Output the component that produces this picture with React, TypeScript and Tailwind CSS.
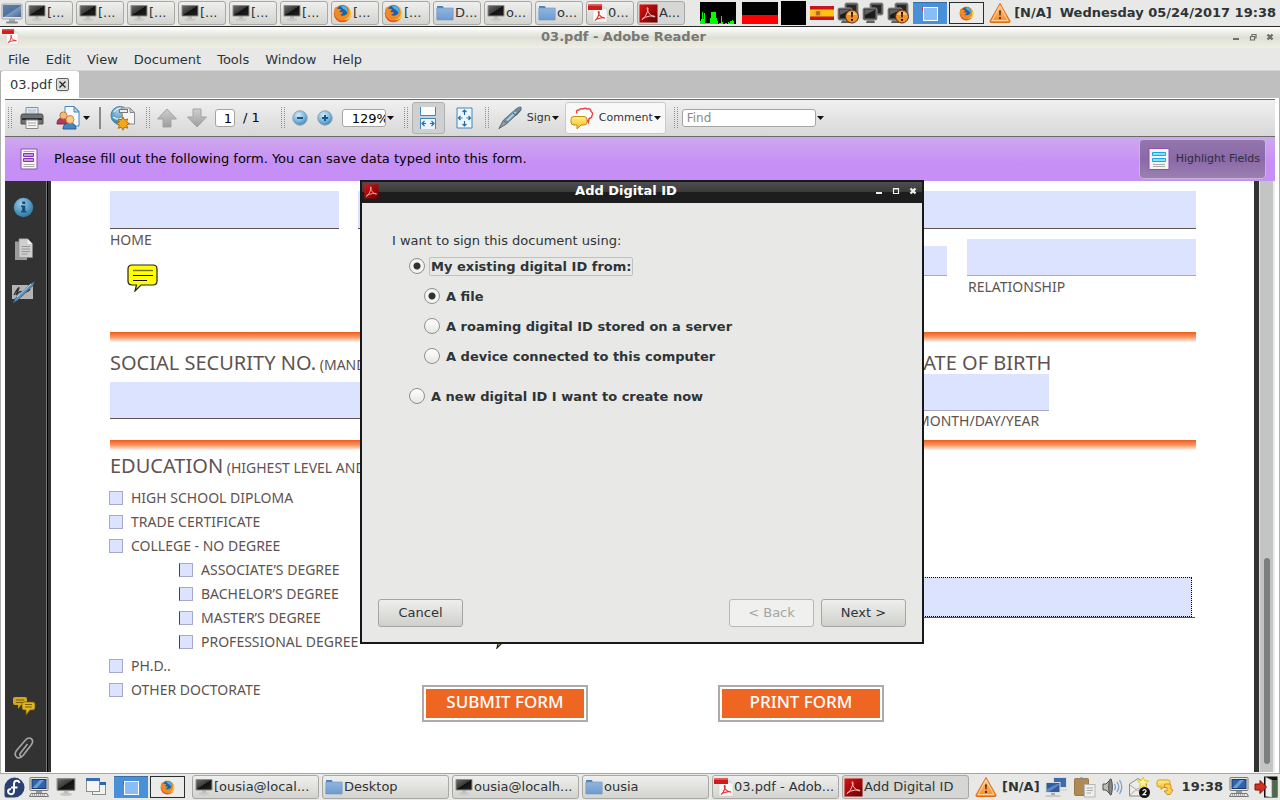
import React from "react";

const uiFont = "font-['DejaVu_Sans',sans-serif]";
const formFont = "font-['Noto_Sans',sans-serif]";

function Defs() {
  return (
    <svg width="0" height="0" className="absolute" aria-hidden="true">
      <defs>
        <linearGradient id="gScreen" x1="0" y1="0" x2="1" y2="1">
          <stop offset="0" stopColor="#6a6a6a" />
          <stop offset=".48" stopColor="#3a3a3a" />
          <stop offset=".5" stopColor="#111" />
          <stop offset="1" stopColor="#222" />
        </linearGradient>
        <linearGradient id="gBlueScreen" x1="0" y1="0" x2="1" y2="1">
          <stop offset="0" stopColor="#5f82ac" />
          <stop offset=".5" stopColor="#5273a0" />
          <stop offset=".55" stopColor="#7f9cc0" />
          <stop offset="1" stopColor="#456690" />
        </linearGradient>
        <linearGradient id="gFolder" x1="0" y1="0" x2="0" y2="1">
          <stop offset="0" stopColor="#91b5de" />
          <stop offset="1" stopColor="#6c9bd0" />
        </linearGradient>
        <linearGradient id="gRed" x1="0" y1="0" x2="1" y2="1">
          <stop offset="0" stopColor="#e01010" />
          <stop offset="1" stopColor="#6a0000" />
        </linearGradient>
        <linearGradient id="gFlame" x1="0" y1="1" x2="1" y2="0">
          <stop offset="0" stopColor="#d9341b" />
          <stop offset=".6" stopColor="#f58220" />
          <stop offset="1" stopColor="#fcd535" />
        </linearGradient>
        <linearGradient id="gWarn" x1="0" y1="0" x2="0" y2="1">
          <stop offset="0" stopColor="#ffc58a" />
          <stop offset="1" stopColor="#fb8a1e" />
        </linearGradient>
        <radialGradient id="gBall" cx=".4" cy=".3" r=".75">
          <stop offset="0" stopColor="#d3ecf8" />
          <stop offset=".55" stopColor="#7cbbe0" />
          <stop offset="1" stopColor="#3b7fb4" />
        </radialGradient>
        <radialGradient id="gInfo" cx=".4" cy=".3" r=".8">
          <stop offset="0" stopColor="#9fcbe2" />
          <stop offset=".6" stopColor="#4a94c0" />
          <stop offset="1" stopColor="#2a6794" />
        </radialGradient>
        <linearGradient id="gGrey" x1="0" y1="0" x2="0" y2="1">
          <stop offset="0" stopColor="#cfcfcf" />
          <stop offset="1" stopColor="#9d9d9d" />
        </linearGradient>
        <linearGradient id="gYellow" x1="0" y1="0" x2="0" y2="1">
          <stop offset="0" stopColor="#fff08a" />
          <stop offset="1" stopColor="#f5b91e" />
        </linearGradient>
      </defs>
    </svg>
  );
}

/* ---------- icons ---------- */

const MonitorIcon = ({ s = 18 }: { s?: number }) => (
  <svg width={s} height={s} viewBox="0 0 18 18" className="shrink-0">
    <ellipse cx="9" cy="15.6" rx="5.5" ry="1.6" fill="#c9c9c7" />
    <path d="M7 12h4v3H7z" fill="#bdbdbb" />
    <rect x=".5" y="1" width="17" height="11.5" rx="1" fill="#8d8d8b" />
    <rect x="1.5" y="2" width="15" height="9.5" fill="url(#gScreen)" />
  </svg>
);

const DesktopIcon = ({ s = 22 }: { s?: number }) => (
  <svg width={s} height={s} viewBox="0 0 22 22" className="shrink-0">
    <path d="M8 17h6v3H8z" fill="#a9a9a7" />
    <rect x="5" y="19.5" width="12" height="2" rx="1" fill="#8e8e8c" />
    <rect x="1" y="2" width="20" height="15" rx="1" fill="#e3e4e2" stroke="#a5a6a4" />
    <rect x="2" y="3" width="18" height="12" fill="url(#gBlueScreen)" />
  </svg>
);

const ComputerIcon = () => (
  <svg width="22" height="22" viewBox="0 0 22 22" className="shrink-0">
    <rect x="2" y="1.5" width="18" height="13" rx="1" fill="#ececea" stroke="#777" />
    <rect x="4" y="3.5" width="14" height="9" fill="#2f63ad" stroke="#17386c" />
    <path d="M4.500 12 12 4h4l-7 8z" fill="#6f9bd4" />
    <path d="M8 15h6v2H8z" fill="#999" />
    <path d="M3 17.500h16l1.500 3h-19z" fill="#e4e4e2" stroke="#777" />
    <path d="M4 19h14" stroke="#777" strokeDasharray="1 1" />
  </svg>
);

const FolderIcon = () => (
  <svg width="18" height="18" viewBox="0 0 18 18" className="shrink-0">
    <path d="M1 4V2.500Q1 2 1.600 2h5.200l1 2z" fill="#4f7fb8" />
    <path d="M.8 4h16.400v11.400q0 .6-.6.6H1.400q-.6 0-.6-.6z" fill="url(#gFolder)" stroke="#6b95c6" strokeWidth=".6" />
  </svg>
);

const FirefoxIcon = ({ s = 19 }: { s?: number }) => (
  <svg width={s} height={s} viewBox="0 0 20 20" className="shrink-0">
    <circle cx="10" cy="10" r="9.200" fill="url(#gFlame)" />
    <circle cx="10.200" cy="7.800" r="6.400" fill="#1f5fa8" />
    <path d="M8 2.200q4-1.400 6.800 1.500 2 3 .5 6.300Q14 6 10.500 5z" fill="#4fb3e6" />
    <path d="M2 3.500Q3.800 4 5 5.200q2-.4 3.500.6Q7.200 7 7 8.400q1.600.6 3.400.2-.4 2.300-3 3.100 3 1.800 6.600-.7 2.600-2.200 2.200-5.800 3 4.500.2 8.800-3.400 4.200-8.400 3.300Q2.500 15.700 1.400 10 1.200 6 2 3.500z" fill="#f08a24" />
    <path d="M17 5q1.800 3.500 0 7.500-2 3.500-6 4.300 6.400.6 7.800-5Q19.400 8 17 5z" fill="#fcd23a" />
  </svg>
);

const PdfIcon = ({ s = 20 }: { s?: number }) => (
  <svg width={s} height={s} viewBox="0 0 20 20" className="shrink-0">
    <path d="M5 1.500h9l5 5V19H5z" fill="#fafafa" stroke="#cfcfcf" strokeWidth=".7" />
    <path d="M14 1.500v5h5z" fill="#ddd" />
    <path d="M0 1.500h14v5.500H0z" fill="#cf1b1b" />
    <path d="M0 1.500h14v1.500H0z" fill="#e4504a" />
    <path d="M7 17.500q2.500-1.200 4.200-7.500.2-1.500-.6-1.500-1 .6.800 3.600 2 2.600 5.600 3-2.300-.8-6.200.4Q8 16.300 7 17.500z" fill="none" stroke="#e2302c" strokeWidth="1.100" />
  </svg>
);

const AcrobatIcon = ({ s = 19 }: { s?: number }) => (
  <svg width={s} height={s} viewBox="0 0 20 20" className="shrink-0">
    <rect x=".5" y=".5" width="19" height="19" fill="url(#gRed)" />
    <path d="M3 16.500q4-2 6.300-9.500.5-3.200-.4-3.200-1.200.4.800 4.800 2.400 4.300 6.700 5.200 1-.8-.8-1.300-4.200-.2-8.600 1.300Q4 15.300 3 16.500z" fill="none" stroke="#f4d0d0" strokeWidth="1" />
  </svg>
);

const FlagIcon = () => (
  <svg width="24" height="14" viewBox="0 0 24 14" className="shrink-0">
    <path d="M0 0h24v14H0z" fill="#c8141e" />
    <path d="M0 3.500h24v7H0z" fill="#fcc40f" />
    <rect x="6" y="5" width="4" height="4.500" rx="1" fill="#b8642a" />
    <path d="M5 5v4.500M11 5v4.500" stroke="#d9a070" />
  </svg>
);

const NetworkIcon = ({ alert }: { alert?: boolean }) => (
  <svg width="23" height="22" viewBox="0 0 23 22" className="shrink-0">
    <rect x="8" y="1" width="13" height="12" rx="1.500" fill="#555" stroke="#8a8a8a" />
    <path d="M10 3h9v8h-9z" fill="#262626" />
    <rect x="1" y="6" width="14" height="12" rx="1.500" fill="#4a4a4a" stroke="#909090" />
    <path d="M3 8h10v8H3z" fill="#1c1c1c" />
    <path d="M3 8h10L3 13z" fill="#606060" />
    <path d="M5 18.500h7l1 2.500H4z" fill="#5f5f5f" />
    {alert && (
      <g>
        <circle cx="15" cy="14.500" r="6.500" fill="#f3902b" stroke="#5b2a10" />
        <path d="M10 13a5.500 5.500 0 0 1 10 0z" fill="#fdc36b" />
        <path d="M14 10h2l-.4 5.500h-1.200zM14 17h2v1.800h-2z" fill="#111" />
      </g>
    )}
  </svg>
);

const WarningIcon = () => (
  <svg width="22" height="22" viewBox="0 0 22 22" className="shrink-0">
    <path d="M11 1.500 21 19q.4 1.500-1 1.500H2Q.6 20.500 1 19z" fill="url(#gWarn)" stroke="#e06c10" strokeLinejoin="round" />
    <path d="M11 4 18.800 18.500H3.200z" fill="none" stroke="#ffe0bd" strokeWidth=".8" />
    <path d="M10 8.500h2l-.4 5h-1.200zM10 15h2v2h-2z" fill="#4c3320" />
  </svg>
);

const CpuGraph = () => (
  <svg width="36" height="22" viewBox="0 0 36 22" className="shrink-0" shapeRendering="crispEdges">
    <path d="M0 0h36v22H0z" fill="#000" />
    <path d="M0 22v-3h1v-2h1v-7h1v7h1v-6h1v10h5v-5h1v-6h5v6h1v3h1v3h1v-1h2v-7h1v6h1v2h2v-1h2v1h1v-2h1v1h1v-2h2v-1h1v1h1v4z" fill="#0f0" />
  </svg>
);

const Pager = () => (
  <div className="flex shrink-0 items-center gap-[2px]">
    <button aria-label="Workspace 1" className="flex h-[22px] w-[34px] items-center justify-center border-t border-[#3a6da5] bg-[#4a90d9]">
      <svg width="16" height="14" viewBox="0 0 16 14">
        <path d="M0 0h4v4H0z" fill="#d43a3a" />
        <rect x="1.500" y=".5" width="14" height="13" fill="#8abdf5" stroke="#fff" />
      </svg>
    </button>
    <button aria-label="Workspace 2" className="flex h-[22px] w-[35px] items-center justify-center border border-[#2a2d30] bg-[#ebebe9]">
      <FirefoxIcon s={15} />
    </button>
  </div>
);

const FedoraIcon = () => (
  <svg width="21" height="21" viewBox="0 0 21 21" className="shrink-0">
    <path d="M10.500.5a10 10 0 1 1 0 20H2.500Q.5 20.500.5 18.500v-8a10 10 0 0 1 10-10z" fill="#294172" />
    <path d="M15.500 6q-.6-2.200-2.700-2.200-2.800 0-2.800 3V14q0 3.200-3 3.200-2.600 0-3-2.500 0-2.700 3-2.700M7 10.500h6.500" fill="none" stroke="#fff" strokeWidth="1.900" />
  </svg>
);

const WindowsIcon = () => (
  <svg width="22" height="20" viewBox="0 0 22 20" className="shrink-0">
    <rect x="7.500" y="6.500" width="13" height="11" fill="#f2f2f0" stroke="#8d8d8b" />
    <path d="M7 5h14v3H7z" fill="#2f63ad" />
    <rect x="1.500" y="2.500" width="13" height="12" fill="#f5f5f3" stroke="#8d8d8b" />
    <path d="M1 1h14v3H1z" fill="#3b6cb2" />
  </svg>
);

const NetBlueIcon = () => (
  <svg width="23" height="22" viewBox="0 0 23 22" className="shrink-0">
    <rect x="8.500" y="1.500" width="13" height="10" fill="#3f6cae" stroke="#dcdcda" />
    <path d="M9 13h13l1 2H9z" fill="#d8d8d6" />
    <rect x="1" y="6.500" width="14" height="10" fill="#2f5c9f" stroke="#dcdcda" />
    <path d="M2 13 12 8h2v1L4 16H2z" fill="#5f87bf" />
    <path d="M1 19h14l1 2H0z" fill="#c9c9c7" />
    <path d="M6 17h4v2H6z" fill="#aaa" />
  </svg>
);

const ClipboardIcon = () => (
  <svg width="23" height="22" viewBox="0 0 23 22" className="shrink-0">
    <rect x="1.500" y="2.500" width="14" height="17" rx="1" fill="#b08a55" stroke="#9a7747" />
    <path d="M5 4V2h2q1.500-2 3 0h2v2z" fill="#8a8a86" />
    <rect x="11.500" y="8.500" width="10.500" height="12.500" fill="#efefed" stroke="#b5b5b3" />
    <path d="M13.500 12h6.500M13.500 14.500h6.500M13.500 17h4.500" stroke="#aaa" />
  </svg>
);

const SpeakerIcon = () => (
  <svg width="22" height="22" viewBox="0 0 22 22" className="shrink-0">
    <path d="M2 8h3l5-5v16l-5-5H2z" fill="#bdbdbb" stroke="#4e4e4c" />
    <ellipse cx="9.500" cy="11" rx="1.800" ry="8" fill="#8a8a88" stroke="#4e4e4c" />
    <path d="M13.500 8q2 3 0 6M16 6q3.500 5 0 10M18.500 4q4.500 7 0 14" fill="none" stroke="#7f9fd0" strokeWidth="1.300" />
  </svg>
);

const MailIcon = () => (
  <svg width="23" height="22" viewBox="0 0 23 22" className="shrink-0">
    <path d="M1.500 8 10 2.500 18.500 8v12h-17z" fill="#ecece8" stroke="#8d8d89" />
    <path d="m2 19 8-7 8 7M2 9l8 6 8-6" fill="none" stroke="#aaa" />
    <path d="m15 1 1.600 3.700 4 .3-3 2.700.9 4-3.500-2.100L11.500 11.700l.9-4-3-2.700 4-.3z" fill="#fff59a" stroke="#e9c81c" />
    <circle cx="16.500" cy="16.500" r="5.500" fill="#111" />
    <path d="M14.800 15q.3-1.500 1.800-1.500 1.600.2 1.500 1.500-.3 1-3 3.700h3.300" fill="none" stroke="#fff" strokeWidth="1.200" />
  </svg>
);

const ChatArrowIcon = () => (
  <svg width="18" height="18" viewBox="0 0 18 18" className="shrink-0">
    <path d="M3 2h9q2 0 2 2v3q0 2-2 2H8l-3 2.500V9H3Q1 9 1 7V4q0-2 2-2z" fill="url(#gYellow)" stroke="#d99a1b" />
    <path d="M9 6h4q2 0 2 2v3l2 1-3 4.500-3 0-3-3.500h3V9.500H8z" fill="#ffd057" stroke="#d98a13" />
  </svg>
);

const ExitIcon = () => (
  <svg width="24" height="22" viewBox="0 0 24 22" className="shrink-0">
    <path d="M10 .5h13.500v21H10z" fill="#111" />
    <path d="M18 4h5v17h-5z" fill="#4b6b4b" />
    <path d="m11.500 1 6.500 3v17.500l-6.500-1z" fill="#f0f0ee" stroke="#777" strokeWidth=".7" />
    <path d="M1 8h5V4.500l6.500 6.500L6 17.500V14H1z" fill="#d5311d" stroke="#7a150c" />
  </svg>
);

const PrinterIcon = () => (
  <svg width="24" height="24" viewBox="0 0 24 24">
    <path d="M6 1.500h12V10H6z" fill="#dfe9f2" stroke="#8a9299" />
    <path d="M8 4h8M8 6h8" stroke="#aebdca" />
    <path d="M3 8h18q2 0 2 2v8H1v-8q0-2 2-2z" fill="#6f7275" stroke="#4a4c4e" />
    <path d="M2 12h20v2H2z" fill="#2e3032" />
    <path d="M6 14h12v8.500H6z" fill="#f4f4f4" stroke="#8a8a8a" />
    <path d="M8 17h8M8 19.500h8" stroke="#a9a9a9" />
  </svg>
);

const PeopleIcon = () => (
  <svg width="25" height="24" viewBox="0 0 25 24">
    <path d="M9 .5h9l5 5V20H9z" fill="#f7fbff" stroke="#4b86bd" />
    <path d="M18 .5V6h5z" fill="#b9d3ea" stroke="#4b86bd" />
    <path d="M1 18q0-6 5.500-6t5.500 6z" fill="#b23a5c" stroke="#84243f" />
    <circle cx="7.500" cy="9.500" r="3.600" fill="#f6ba7c" stroke="#c27c3c" />
    <path d="M7 23q0-6 6.500-6t6.500 6z" fill="#4684bf" stroke="#245c94" />
    <circle cx="14" cy="13.500" r="4" fill="#fcc98d" stroke="#cf8440" />
  </svg>
);

const GlobeIcon = () => (
  <svg width="26" height="25" viewBox="0 0 26 25">
    <circle cx="10" cy="9.500" r="9" fill="url(#gInfo)" stroke="#4a7fa9" />
    <path d="M4 6q3-4 8-4M3 11q5 4 11 0" fill="none" stroke="#d6eaf7" strokeWidth="1.500" />
    <path d="M11 2h9l4.500 4.500V18H14z" fill="#f5f5f5" stroke="#8b8b8b" />
    <path d="M20 2v4.500h4.500z" fill="#cfcfcf" stroke="#8b8b8b" />
    <rect x="9.500" y="3.500" width="8" height="3" fill="#eee" stroke="#777" />
    <path d="m13 11 1.500 3 3.200-1.100-1.100 3.200 3 1.400-3 1.500 1.100 3.200-3.200-1.100L13 24.200l-1.500-3-3.200 1.100 1.100-3.200-3-1.500 3-1.500-1.100-3.200 3.200 1.100z" fill="#f6a81c" stroke="#b4700c" />
  </svg>
);

const ArrowIcon = ({ down }: { down?: boolean }) => (
  <svg width="20" height="20" viewBox="0 0 20 20">
    <path d={down ? "M6 1h8v8h5.500L10 19 .5 9H6z" : "M6 19h8v-8h5.500L10 1 .5 11H6z"} fill="url(#gGrey)" stroke="#a3a3a3" />
  </svg>
);

const ZoomIcon = ({ plus }: { plus?: boolean }) => (
  <svg width="16" height="16" viewBox="0 0 16 16">
    <circle cx="8" cy="8" r="7.200" fill="url(#gBall)" stroke="#8aa3b5" />
    <path d={plus ? "M5 8h6M8 5v6" : "M5 8h6"} stroke="#1d5585" strokeWidth="2" />
  </svg>
);

const FitWidthIcon = () => (
  <svg width="18" height="24" viewBox="0 0 18 24">
    <path d="M1.500 1v8.500h15V1" fill="#fafcff" stroke="#3f87bd" />
    <path d="M1.500 12.500h15v10.500h-15z" fill="#eaf4fc" />
    <path d="M1.500 23V12.500h15V23" fill="none" stroke="#3f87bd" />
    <path d="M3 17.500h4M11 17.500h4M5.500 15 3 17.500 5.500 20M12.500 15l2.500 2.500-2.500 2.500" fill="none" stroke="#256da6" strokeWidth="1.200" />
  </svg>
);

const FitPageIcon = () => (
  <svg width="17" height="22" viewBox="0 0 17 22">
    <path d="M1 1h15v20H1z" fill="#eef7fd" stroke="#3f87bd" />
    <path d="M8.500 3v5M6.500 5l2-2 2 2M8.500 19v-5M6.500 17l2 2 2-2M2.500 11h4M4.500 9l-2 2 2 2M14.500 11h-4M12.500 9l2 2-2 2" fill="none" stroke="#256da6" strokeWidth="1.200" />
  </svg>
);

const PenIcon = () => (
  <svg width="25" height="24" viewBox="0 0 25 24">
    <path d="m1 22.500 4.500-8.500L18.500 2.500q3-2 4.500-1.500.8 1.500-.5 4L9 17.500z" fill="#6f8c9f" stroke="#5a6870" strokeWidth=".8" />
    <path d="M8 14 17 5.500l1.500 1L10 15z" fill="#a9d0e6" />
    <path d="m5.500 14.500 3 3-7.500 5z" fill="#a0a0a0" stroke="#666" strokeWidth=".8" />
    <path d="m15 7 3 2.500 4-5" fill="none" stroke="#3f5562" />
  </svg>
);

const CommentIcon = () => (
  <svg width="24" height="23" viewBox="0 0 24 23">
    <path d="M7 6.500Q5.500 3 9 3q1-2 4-1 2-1.500 4 0 4-1 4 2.500 2.500 1.500 1 4 0 2.500-3 3l-.5 4-2.500-4q-3 1-6-1" fill="#fff" stroke="#e2453c" strokeWidth="1.400" />
    <path d="M4 9.500h10q3 0 3 3V15q0 3-3 3h-3l-4 4v-4H4q-3 0-3-3v-2.500q0-3 3-3z" fill="url(#gYellow)" stroke="#c98a12" />
  </svg>
);

const FormIcon = ({ tone }: { tone: "purple" | "cyan" }) => {
  const edge = tone === "purple" ? "#8a34b4" : "#12a5f0";
  const fill = tone === "purple" ? "#c795e3" : "#8fe2fb";
  return (
    <svg width={tone === "purple" ? 18 : 22} height="22" viewBox={tone === "purple" ? "0 0 18 22" : "-2 0 22 22"} className="shrink-0">
      {tone === "purple" ? (
        <path d="M1 1h16v20H1z" fill="#f8f4fa" stroke="#8d4fae" />
      ) : (
        <path d="M-1 .5h20v21H-1z" fill="#f5f5f5" stroke="#8d4fae" />
      )}
      <path
        d={tone === "purple" ? "M3.500 5.500h10v3h-10zM3.500 10.500h10v3h-10z" : "M2.500 4.500h13v3h-13zM2.500 10.500h13v3h-13z"}
        fill={fill}
        stroke={edge}
      />
      <path d={tone === "purple" ? "M3.500 3.500h11M3.500 16.500h11M3.500 18.500h11" : "M3 16.500h12M3 18.500h12"} stroke="#aaa" />
    </svg>
  );
};

const Note = () => (
  <svg width="31" height="28" viewBox="0 0 31 28">
    <path d="M5 1h21q4 0 4 4v12q0 4-4 4H14l-6 6 1.500-6H5q-4 0-4-4V5q0-4 4-4z" fill="#ff0" stroke="#222" strokeWidth="1.200" />
    <path d="M6 6.500h20" stroke="#777700" strokeWidth="1.400" />
    <path d="M6 11.500h20M6 16.500h14" stroke="#111" strokeWidth="1.200" />
  </svg>
);

const Caret = () => (
  <svg width="7" height="4" viewBox="0 0 7 4" className="shrink-0">
    <path d="M0 0h7L3.500 4z" fill="#111" />
  </svg>
);

const Grip = () => (
  <svg width="4" height="22" viewBox="0 0 4 22" className="block shrink-0" shapeRendering="crispEdges">
    <path d="M.5 0v22M3.500 0v22" stroke="#8e8e8e" strokeDasharray="1 1" />
  </svg>
);

/* ---------- desktop panels ---------- */

type TaskKind = "term" | "fox" | "folder" | "pdf" | "acro";

const taskIcon: Record<TaskKind, React.ReactNode> = {
  term: <MonitorIcon />,
  fox: <FirefoxIcon />,
  folder: <FolderIcon />,
  pdf: <PdfIcon />,
  acro: <AcrobatIcon />,
};

function Task({ kind, text, wide, active }: { kind: TaskKind; text: string; wide?: boolean; active?: boolean }) {
  return (
    <button
      className={`flex h-6 items-center overflow-hidden rounded-[3px] border border-[#a8a8a4] whitespace-nowrap text-[#2e3436] ${
        wide ? "w-[127px]" : "w-12"
      } ${active ? "bg-[#d6d6d4]" : "bg-linear-to-b from-[#efefed] to-[#d3d3d0]"}`}
    >
      <span className="flex w-[21px] shrink-0 justify-center">{taskIcon[kind]}</span>
      <span>{text}</span>
    </button>
  );
}

const topTasks: [TaskKind, string][] = [
  ["term", "[..."],
  ["term", "[..."],
  ["term", "[..."],
  ["term", "[..."],
  ["term", "[..."],
  ["term", "[..."],
  ["fox", "[..."],
  ["fox", "[..."],
  ["folder", "D..."],
  ["term", "o..."],
  ["folder", "o..."],
  ["pdf", "0..."],
  ["acro", "A..."],
];

const bottomTasks: [TaskKind, string][] = [
  ["term", "[ousia@local..."],
  ["folder", "Desktop"],
  ["term", "ousia@localh..."],
  ["folder", "ousia"],
  ["pdf", "03.pdf - Adob..."],
  ["acro", "Add Digital ID"],
];

function TopPanel() {
  return (
    <header className="flex h-[27px] shrink-0 items-center border-b border-[#2a2a2a] bg-[#e8e8e6]">
      <span className="flex w-[25px] pl-[1px]">
        <DesktopIcon />
      </span>
      <nav className="flex gap-[3px]">
        {topTasks.map(([k, t], i) => (
          <Task key={i} kind={k} text={t} active={k === "acro"} />
        ))}
      </nav>
      <div className="ml-auto flex items-center gap-[3px] pr-1 font-bold whitespace-nowrap text-[#2e3436]">
        <CpuGraph />
        <div className="ml-[3px] h-[22px] w-9 border-b-[9px] border-[#f00] bg-black" />
        <div className="mr-[1px] h-6 w-[25px] bg-black" />
        <FlagIcon />
        <span className="flex gap-[2px]">
          <NetworkIcon alert />
          <NetworkIcon />
          <NetworkIcon alert />
        </span>
        <span className="mr-[2px] flex">
          <Pager />
        </span>
        <WarningIcon />
        <span>[N/A]</span>
        <time className="ml-[5px]">Wednesday 05/24/2017 19:38</time>
      </div>
    </header>
  );
}

function BottomPanel() {
  return (
    <footer className="flex h-[27px] shrink-0 items-center border-t border-[#a5a5a2] bg-[#e8e8e6]">
      <div className="flex w-[192px] items-center pl-1">
        <FedoraIcon />
        <span className="ml-[3px] flex">
          <ComputerIcon />
        </span>
        <span className="ml-[6px] flex">
          <MonitorIcon s={20} />
        </span>
        <span className="mr-[7px] ml-[9px] flex">
          <WindowsIcon />
        </span>
        <Pager />
      </div>
      <nav className="flex gap-[3px]">
        {bottomTasks.map(([k, t]) => (
          <Task key={t} kind={k} text={t} wide active={k === "acro"} />
        ))}
      </nav>
      <div className="ml-auto flex items-center gap-1 pr-[2px] font-bold whitespace-nowrap text-[#2e3436]">
        <div className="flex items-center gap-[5px]">
          <WarningIcon />
          <span>[N/A]</span>
          <NetBlueIcon />
          <ClipboardIcon />
          <SpeakerIcon />
          <MailIcon />
          <ChatArrowIcon />
        </div>
        <time className="mr-[1px] ml-1">19:38</time>
        <ComputerIcon />
        <ExitIcon />
      </div>
    </footer>
  );
}

/* ---------- reader window ---------- */

function WindowButtons({ restore, light }: { restore?: boolean; light?: boolean }) {
  const c = light ? "#eeeeec" : "#6f6f6b";
  return (
    <div className="flex items-center gap-[9px]">
      <button aria-label="Minimize">
        <svg width="8" height="8" viewBox="0 0 8 8" className="block">
          <path d="M1 5h6v2H1z" fill={c} />
        </svg>
      </button>
      <button aria-label="Maximize">
        <svg width="8" height="8" viewBox="0 0 8 8" className="block">
          {restore ? (
            <path d="M3 3V1.500h4V5H5.500M1.500 3.500h4V7h-4z" fill="none" stroke={c} strokeWidth="1.200" />
          ) : (
            <path d="M1.500 1.500h5v5h-5zM1 2h6" fill="none" stroke={c} strokeWidth="1.200" />
          )}
        </svg>
      </button>
      <button aria-label="Close">
        <svg width="8" height="8" viewBox="0 0 8 8" className="block">
          <path d="m1.500 1.500 5 5m0-5-5 5" stroke={c} strokeWidth="2.400" />
        </svg>
      </button>
    </div>
  );
}

function Toolbar() {
  return (
    <div className="flex h-[38px] shrink-0 items-center border-y border-[#6a6a6a] bg-linear-to-b from-[#f0f0f0] to-[#d8d8d8] pl-[3px] text-black">
      <Grip />
      <button aria-label="Print" className="ml-2">
        <PrinterIcon />
      </button>
      <button aria-label="Collaborate" className="ml-3 flex items-center gap-[2px]">
        <PeopleIcon />
        <Caret />
      </button>
      <div className="mx-[9px] h-[22px] w-[2px] bg-[#8a8a8a]" />
      <button aria-label="Services">
        <GlobeIcon />
      </button>
      <span className="ml-[10px]">
        <Grip />
      </span>
      <button aria-label="Previous page" className="ml-[7px]">
        <ArrowIcon />
      </button>
      <button aria-label="Next page" className="ml-[10px]">
        <ArrowIcon down />
      </button>
      <input aria-label="Page number" defaultValue="1" className="ml-2 h-[18px] w-5 rounded-[3px] border border-[#a5a5a5] bg-white pr-[2px] text-right" />
      <span className="ml-2 whitespace-pre">/ 1</span>
      <span className="ml-[21px]">
        <Grip />
      </span>
      <button aria-label="Zoom out" className="ml-[7px]">
        <ZoomIcon />
      </button>
      <button aria-label="Zoom in" className="ml-[9px]">
        <ZoomIcon plus />
      </button>
      <input aria-label="Zoom level" defaultValue="129%" className="ml-[9px] h-[18px] w-11 rounded-[3px] border border-[#a5a5a5] bg-white pl-[9px]" />
      <span className="ml-[1px]">
        <Caret />
      </span>
      <span className="ml-[10px]">
        <Grip />
      </span>
      <button aria-label="Fit width" className="ml-1 flex h-8 w-[33px] items-center justify-center rounded-[3px] border border-[#b0b0b0] bg-[#d0d0d0]">
        <FitWidthIcon />
      </button>
      <button aria-label="Fit page" className="ml-[11px]">
        <FitPageIcon />
      </button>
      <span className="ml-3">
        <Grip />
      </span>
      <button className="ml-[9px] flex items-center text-[11px] text-[#333]">
        <PenIcon />
        <span className="mr-[1px] ml-1">Sign</span>
        <Caret />
      </button>
      <button className="ml-[6px] flex h-8 items-center rounded-[3px] border border-[#cacaca] bg-[#f8f8f8] px-1 text-[11px] text-[#333]">
        <CommentIcon />
        <span className="mr-[1px] ml-[5px]">Comment</span>
        <Caret />
      </button>
      <span className="ml-2">
        <Grip />
      </span>
      <input aria-label="Find" placeholder="Find" className="ml-1 h-[18px] w-[134px] rounded-[3px] border border-[#a5a5a5] bg-white pl-1 text-[12px] placeholder:text-[#8a8a8a]" />
      <span className="ml-[1px]">
        <Caret />
      </span>
    </div>
  );
}

function Sidebar() {
  return (
    <aside className="flex w-[42px] shrink-0 flex-col items-center border-r border-[#777] bg-[#323232] pt-[16px] pr-1 pb-3">
      <button aria-label="Document information">
        <svg width="21" height="21" viewBox="0 0 21 21">
          <circle cx="10.500" cy="10.500" r="9.700" fill="url(#gInfo)" />
          <path d="M9.200 4.500h3v2.500h-3zM8 8.500h4.200V14H13.500v1.500H8V14h1.200v-4H8z" fill="#174a76" />
        </svg>
      </button>
      <button aria-label="Pages" className="mt-5">
        <svg width="20" height="23" viewBox="0 0 20 23">
          <path d="M1 3.500h12v18.500H1z" fill="#9c9c9c" />
          <path d="M5 .8h8.500L18.500 6v13.500H5z" fill="#cfcfcf" stroke="#8a8a8a" strokeWidth=".6" />
          <path d="M13.500.8V6h5z" fill="#f0f0f0" />
          <path d="M7.500 8.500h8.500M7.500 11h8.500M7.500 13.500h8.500M7.500 16h6" stroke="#999" />
        </svg>
      </button>
      <button aria-label="Signatures" className="mt-5">
        <svg width="25" height="23" viewBox="0 0 25 23">
          <path d="M1 4h21v14H1z" fill="#b4b4b4" />
          <path d="M3 14q5-9 5-7-1 3-3 7 5-5 5-3 1 2 4-1 2 2 5-2" fill="none" stroke="#333" strokeWidth="1.300" />
          <path d="m2 22 2.500-5L20 2.500l3.500-2L22 4.500 7 19z" fill="#5a92b8" stroke="#2d4f68" strokeWidth=".7" />
          <path d="m6 16 14-13" stroke="#c2dbea" />
        </svg>
      </button>
      <button aria-label="Comments" className="mt-auto">
        <svg width="24" height="20" viewBox="0 0 24 20">
          <path d="M3 1h10q2 0 2 2v4q0 2-2 2H9l-3 4V9H3Q1 9 1 7V3q0-2 2-2z" fill="#d2a71d" />
          <path d="M4 4h8M4 6.500h7" stroke="#7d5f07" />
          <path d="M12 6h9q2 0 2 2v4q0 2-2 2h-3l-4 5v-5h-2q-2 0-2-2V8q0-2 2-2z" fill="#dfb722" stroke="#6f570b" strokeWidth=".7" />
          <path d="M13 8.500h7M13 11h7" stroke="#7d5f07" />
        </svg>
      </button>
      <button aria-label="Attachments" className="mt-5">
        <svg width="22" height="24" viewBox="0 0 22 24">
          <path d="m14.500 8-7 9q-1.500 2 0 3 1.500 1 3-1l8-10.500q2.500-4-.5-6-3-1.600-5.500 1.500L3.500 14.500q-3 4.500.5 7 3 1.500 6-2l5-6.500" fill="none" stroke="#a5a5a5" strokeWidth="1.600" />
        </svg>
      </button>
    </aside>
  );
}

const OrangeRule = () => <div className="h-[10px] shrink-0 bg-linear-to-b from-[#ee5c14] via-[#f7935f] to-[#fff2ea]" />;

const darkEdge = "border-[#a7a9cc] border-l-[#4a4646]";
const plainEdge = "border-[#a7a9cc]";

const degrees: [string, boolean][] = [
  ["HIGH SCHOOL DIPLOMA", false],
  ["TRADE CERTIFICATE", false],
  ["COLLEGE - NO DEGREE", false],
  ["ASSOCIATE’S DEGREE", true],
  ["BACHELOR’S DEGREE", true],
  ["MASTER’S DEGREE", true],
  ["PROFESSIONAL DEGREE", true],
  ["PH.D..", false],
  ["OTHER DOCTORATE", false],
];

const fieldCls = "bg-[#dce3ff] border-b border-[#5e5350] outline-none";

function FormPage() {
  return (
    <main className={`${formFont} relative flex min-w-0 flex-1 flex-col overflow-hidden bg-white pt-[10px] pr-[58px] pl-[59px] text-[14px] leading-5 text-[#5e5350]`}>
      <div className="flex shrink-0 gap-[19px]">
        <input id="home" className={`${fieldCls} h-[38px] w-[229px]`} />
        <input aria-label="Address" className={`${fieldCls} h-[38px] min-w-0 flex-1`} />
      </div>
      <div className="flex h-[103px] shrink-0">
        <div className="w-[268px]">
          <label htmlFor="home" className="block pt-[1px]">
            HOME
          </label>
          <span className="mt-[14px] ml-[17px] block">
            <Note />
          </span>
        </div>
        <div className="flex flex-1 gap-5 pt-[10px]">
          <input aria-label="Emergency contact" className={`${fieldCls} mt-[7px] h-[30px] min-w-0 flex-1 border-[#a7a9cc]`} />
          <div className="w-[229px]">
            <input id="relationship" className={`${fieldCls} block h-[37px] w-full border-[#a7a9cc]`} />
            <label htmlFor="relationship" className="block pt-[1px] pl-[1px]">
              RELATIONSHIP
            </label>
          </div>
        </div>
      </div>
      <OrangeRule />
      <div className="flex h-[98px] shrink-0 justify-between">
        <div className="w-[600px] pt-[7px]">
          <label htmlFor="ssn" className="block h-[33px] leading-7 whitespace-nowrap">
            <span className="text-[20px]">SOCIAL SECURITY NO.</span> (MANDATORY)
          </label>
          <input id="ssn" className={`${fieldCls} block h-[37px] w-full`} />
        </div>
        <div className="mr-[147px] w-[140px] pt-[7px]">
          <label htmlFor="dob" className="block h-[25px] text-[20px] leading-7 whitespace-nowrap">
            DATE OF BIRTH
          </label>
          <input id="dob" className={`${fieldCls} block h-[37px] w-full border-[#a7a9cc]`} />
          <p className="pl-2 whitespace-nowrap">MONTH/DAY/YEAR</p>
        </div>
      </div>
      <OrangeRule />
      <h2 className="mt-[2px] h-[30px] shrink-0 text-[14px] leading-7 whitespace-nowrap">
        <span className="text-[20px]">EDUCATION</span> (HIGHEST LEVEL AND YEAR)
      </h2>
      <div className="flex shrink-0">
        <fieldset className="mt-1 w-[312px]">
          {degrees.map(([name, nested]) => (
            <label key={name} className={`flex h-6 items-center gap-2 whitespace-nowrap ${nested ? "ml-[69px]" : "-ml-[1px]"}`}>
              <input type="checkbox" className={`size-[14px] shrink-0 appearance-none border bg-[#dce3ff] ${nested ? darkEdge : plainEdge}`} />
              {name}
            </label>
          ))}
        </fieldset>
        <div className="flex-1 pt-[95px]">
          <div className="mr-[1px] border-b border-[#5e5350] pr-[3px]">
            <input aria-label="School" className="block h-10 w-full border border-dotted border-black bg-[#dce3ff] outline-none" />
          </div>
          <div className="flex gap-[130px] pt-[67px]">
            {["SUBMIT FORM", "PRINT FORM"].map((t) => (
              <button key={t} className="h-[37px] w-[166px] border-2 border-[#b0aaa9] bg-white p-[2px]">
                <span className="flex h-full items-center justify-center bg-[#ee6622] pb-1 text-[17px] font-medium text-white">{t}</span>
              </button>
            ))}
          </div>
        </div>
      </div>
      <span className="absolute top-[440px] left-[438px]">
        <Note />
      </span>
    </main>
  );
}

function Reader() {
  return (
    <section className="flex min-h-0 flex-1 flex-col bg-[#e8e8e6] text-[#2e3436]">
      <div className="flex h-[21px] shrink-0 items-center bg-linear-to-b from-white via-[#dedfd5] to-[#efefe6] px-[2px] pb-[2px]">
        <PdfIcon s={17} />
        <h1 className="flex-1 pr-1 text-center font-bold text-[#777773]">03.pdf - Adobe Reader</h1>
        <span className="pr-1">
          <WindowButtons restore />
        </span>
      </div>
      <nav className="flex h-[22px] shrink-0 items-center pt-[1px]">
        {["File", "Edit", "View", "Document", "Tools", "Window", "Help"].map((m) => (
          <button key={m} className="px-2">
            {m}
          </button>
        ))}
      </nav>
      <div className="flex h-[28px] shrink-0 items-end border-t border-[#d4d4d4] bg-[#bfbfbf]">
        <div className="flex h-[27px] w-[79px] items-center gap-1 rounded-t-[3px] border-l border-[#b0b0b0] bg-white pl-[9px]">
          03.pdf
          <button aria-label="Close tab" className="flex size-[13px] shrink-0 items-center justify-center rounded-[2px] border border-[#666] bg-[#dcdcd8] shadow">
            <svg width="7" height="7" viewBox="0 0 7 7">
              <path d="m.5.5 6 6m0-6-6 6" stroke="#222" strokeWidth="1.200" />
            </svg>
          </button>
        </div>
      </div>
      <div className="flex min-h-0 flex-1 flex-col border-x border-[#b0b0b0] bg-white pt-[1px] pr-1 pb-[1px] pl-1">
        <Toolbar />
        <div className="flex h-[44px] shrink-0 items-center bg-linear-to-b from-[#cfa8ee] to-[#c68ff5] to-60% pr-[9px] pl-[15px] text-black">
          <FormIcon tone="purple" />
          <p className="ml-4 flex-1">Please fill out the following form. You can save data typed into this form.</p>
          <button className="flex h-10 items-center gap-[6px] rounded-[4px] border border-[#c9b3dc] bg-linear-to-b from-[#9277ac] via-[#8b68a8] to-[#9b80b0] pr-[5px] pl-2 text-[11px] text-[#2e2e36]">
            <FormIcon tone="cyan" />
            Highlight Fields
          </button>
        </div>
        <div className="flex min-h-0 flex-1">
          <Sidebar />
          <div className="w-1 shrink-0 border-l border-black bg-[#323232]" />
          <FormPage />
          <div className="w-[5px] shrink-0 bg-[#323232]" />
          <div className="flex w-[14px] shrink-0 flex-col justify-end border-l border-[#e0e0e0] bg-[#c3c5c4] pr-[3px] pb-2 pl-1">
            <div className="h-[206px] rounded-full bg-[#7b7f80]" />
          </div>
          <div className="w-[2px] shrink-0 bg-[#ececec]" />
        </div>
      </div>
    </section>
  );
}

/* ---------- dialog ---------- */

function Radio({ label, name, checked, focused, className }: { label: string; name: string; checked?: boolean; focused?: boolean; className: string }) {
  return (
    <label className={`flex h-[30px] items-center gap-1 font-bold ${className}`}>
      <input
        type="radio"
        name={name}
        defaultChecked={checked}
        className="size-4 shrink-0 appearance-none rounded-full border border-[#8f8f8b] bg-linear-to-b from-white to-[#e6e6e4] checked:bg-[radial-gradient(circle,#2e3436_3px,#f4f4f2_4px)]"
      />
      <span className={`rounded-[2px] border px-[1px] leading-[17px] ${focused ? "border-[#c0c0bc]" : "border-transparent"}`}>{label}</span>
    </label>
  );
}

const btnCls = "h-7 w-[85px] rounded-[3px] border border-[#a5a5a1] bg-linear-to-b from-[#efefed] to-[#cfcfcc]";

function Dialog() {
  return (
    <div role="dialog" aria-label="Add Digital ID" className="absolute top-[180px] left-[360px] flex h-[464px] w-[564px] flex-col border-2 border-[#17181a] bg-[#e8e8e6] text-[#2e3436]">
      <div className="flex h-[21px] shrink-0 items-center bg-linear-to-b from-[#4d4d4d] from-0% via-[#3c3c3c] via-45% to-[#1d1d1d] to-50% pr-[5px] pb-[3px] pl-[2px]">
        <AcrobatIcon s={15} />
        <h2 className="flex-1 pr-[2px] text-center font-bold text-white">Add Digital ID</h2>
        <WindowButtons light />
      </div>
      <div className="flex flex-1 flex-col px-4 pb-[15px]">
        <p className="mt-[28px] ml-[14px] leading-5">I want to sign this document using:</p>
        <Radio name="source" label="My existing digital ID from:" checked focused className="ml-[31px]" />
        <Radio name="store" label="A file" checked className="ml-[46px]" />
        <Radio name="store" label="A roaming digital ID stored on a server" className="ml-[46px]" />
        <Radio name="store" label="A device connected to this computer" className="ml-[46px]" />
        <Radio name="source" label="A new digital ID I want to create now" className="mt-[10px] ml-[31px]" />
        <div className="mt-auto flex items-center gap-[7px]">
          <button className={btnCls}>Cancel</button>
          <button disabled className="ml-auto h-7 w-[85px] rounded-[3px] border border-[#b8b8b4] bg-[#f0f0ee] text-[#a3a5a3]">
            &lt; Back
          </button>
          <button className={btnCls}>Next &gt;</button>
        </div>
      </div>
    </div>
  );
}

export default function App() {
  return (
    <div className={`${uiFont} relative flex h-screen flex-col overflow-hidden text-[13px] leading-4`}>
      <Defs />
      <TopPanel />
      <Reader />
      <BottomPanel />
      <Dialog />
    </div>
  );
}
